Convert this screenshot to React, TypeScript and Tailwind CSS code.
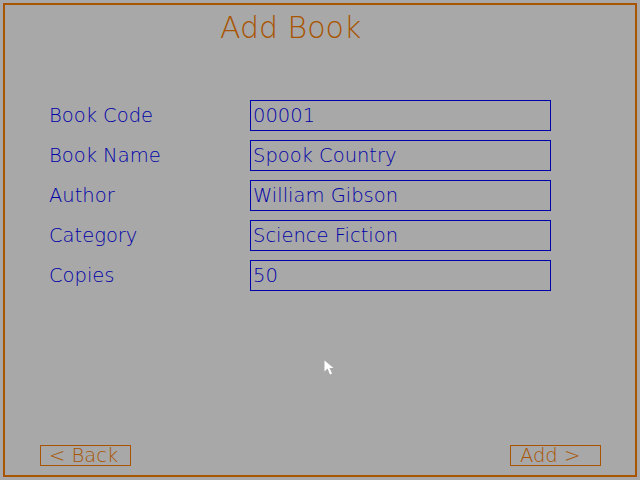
import React from "react"

const fields = [
    { label: "Book Code", value: "00001" },
    { label: "Book Name", value: "Spook Country" },
    { label: "Author", value: "William Gibson" },
    { label: "Category", value: "Science Fiction" },
    { label: "Copies", value: "50" },
]

function Cursor() {
    return (
        <svg className="absolute left-[324px] top-[360px]" width="11" height="16" viewBox="0 0 11 16">
            <path d="M0.5 0.5 L0.5 11.5 L3.5 8.5 L6 14.5 L8 13.5 L5.5 8 L9.5 8 Z" fill="#ffffff" />
        </svg>
    )
}

export default function App() {
    return (
        <div className="relative w-[640px] h-[480px] bg-[#a8a8a8] p-[3px] font-['DejaVu_Sans',sans-serif] font-extralight">
            <div className="flex h-full flex-col border-2 border-[#a85400]">
                {/* Title */}
                <h1 className="ml-[215px] mt-[7px] text-[30px] leading-[32px] font-extralight text-[#a85400]">
                    Add Book
                </h1>

                {/* Form */}
                <div className="ml-[44px] mt-[56px] grid grid-cols-[201px_301px] gap-y-[9px]">
                    {fields.map(f => (
                        <React.Fragment key={f.label}>
                            <div className="h-[31px] text-[19.5px] leading-[31px] text-[#0000a8]">{f.label}</div>
                            <div className="h-[31px] border border-[#0000a8] pl-[2px] text-[19.5px] leading-[29px] text-[#0000a8]">
                                {f.value}
                            </div>
                        </React.Fragment>
                    ))}
                </div>

                {/* Buttons */}
                <div className="mt-auto mb-[9px] flex justify-between pl-[35px] pr-[34px]">
                    <button className="h-[21px] w-[91px] border border-[#a85400] pl-2 text-left text-[19.5px] leading-[19px] text-[#a85400]">
                        &lt; Back
                    </button>
                    <button className="h-[21px] w-[91px] border border-[#a85400] pl-[9px] text-left text-[19.5px] leading-[19px] text-[#a85400]">
                        Add &gt;
                    </button>
                </div>
            </div>
            <Cursor />
        </div>
    )
}
